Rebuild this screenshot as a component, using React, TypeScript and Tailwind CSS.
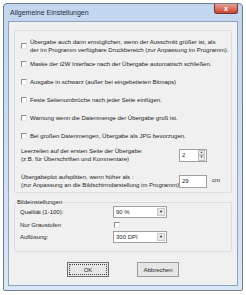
import React from 'react';

function Check({ className = '' }: { className?: string }) {
  return (
    <span
      className={`inline-block w-[6px] h-[6px] shrink-0 border border-t-[#8d8d8d] border-l-[#8d8d8d] border-r-[#e6e6e6] border-b-[#e6e6e6] bg-white ${className}`}
    />
  );
}

function Combo({ value }: { value: string }) {
  return (
    <div className="flex items-center w-[54px] h-[12px] bg-white border border-[#a0a0a0]">
      <span className="flex-1 pl-[2px] leading-none">{value}</span>
      <span className="flex items-center justify-center w-[8px] h-[8px] mr-[1px] bg-[#e9e9e9] border border-[#c8c8c8] text-[4px] leading-none">▼</span>
    </div>
  );
}

const checks: string[][] = [
  [
    'Übergabe auch dann ermöglichen, wenn der Ausschnitt größer ist, als',
    'der im Programm verfügbare Druckbereich (zur Anpassung im Programm).',
  ],
  ['Maske der t2W Interface nach der Übergabe automatisch schließen.'],
  ['Ausgabe in schwarz (außer bei eingebetteten Bitmaps)'],
  ['Feste Seitenumbrüche nach jeder Seite einfügen.'],
  ['Warnung wenn die Datenmenge der Übergabe groß ist.'],
  ['Bei großen Datenmengen, Übergabe als JPG bevorzugen.'],
];

export default function App() {
  return (
    <div
      className="w-[246px] h-[295px] bg-white pt-[3px] pl-[3px] text-[6px] leading-[8px] text-[#1e1e1e]"
      style={{ fontFamily: '"Liberation Sans", Arial, sans-serif' }}
    >
      <div className="w-[240px] h-[288px] rounded-t-[4px] rounded-b-[2px] border border-[#6f7d8c] bg-gradient-to-b from-[#c2d6ee] to-[#d8e6f5] px-[4px] pb-[4px] flex flex-col">
        {/* title bar */}
        <div className="h-[17px] flex items-center justify-between">
          <span className="pl-[2px] text-[7px] text-[#1f2f45]">Allgemeine Einstellungen</span>
          <div className="self-start w-[24px] h-[10px] rounded-b-[3px] border border-t-0 border-[#7a3330] bg-gradient-to-b from-[#e8a093] to-[#c7422f] flex items-center justify-center text-white text-[7px] font-bold leading-none">
            x
          </div>
        </div>
        {/* client */}
        <div className="flex-1 bg-[#f0f0f0] border border-[#8ea3bd] px-[5px] pt-[8px] flex flex-col">
          <div className="h-[163px] border border-[#d5dfe5] rounded-[2px] pl-[6px] pr-[4px] pt-[6px] flex flex-col">
            {checks.map((lines, i) => (
              <div key={i} className={`flex items-center gap-[3px] ${i === 0 ? 'h-[17px]' : 'h-[17px] mt-[1px]'}`}>
                <Check />
                <div className="flex flex-col whitespace-nowrap">
                  {lines.map((l) => (
                    <span key={l}>{l}</span>
                  ))}
                </div>
              </div>
            ))}
            <div className="flex items-center mt-[2px] h-[18px]">
              <div className="flex flex-col w-[158px] whitespace-nowrap">
                <span>Leerzeilen auf der ersten Seite der Übergabe:</span>
                <span>(z.B. für Überschriften und Kommentare)</span>
              </div>
              <div className="flex items-center w-[28px] h-[13px] bg-white border border-[#a0a0a0]">
                <span className="flex-1 pl-[2px]">2</span>
                <div className="flex flex-col w-[7px] h-[11px] mr-[1px]">
                  <span className="flex-1 bg-[#ececec] border border-[#c0c0c0] text-[3px] leading-none flex items-center justify-center">▲</span>
                  <span className="flex-1 bg-[#ececec] border border-[#c0c0c0] text-[3px] leading-none flex items-center justify-center">▼</span>
                </div>
              </div>
            </div>
            <div className="flex items-center mt-[8px] h-[18px]">
              <div className="flex flex-col w-[158px] whitespace-nowrap">
                <span>Übergabeplot aufsplitten, wenn höher als :</span>
                <span>(zur Anpassung an die Bildschirmdarstellung im Programm)</span>
              </div>
              <div className="w-[28px] h-[13px] bg-white border border-[#a0a0a0] pl-[2px] flex items-center">29</div>
              <span className="ml-[5px] -mt-[3px]">cm</span>
            </div>
          </div>
          <div className="relative mt-[9px] h-[50px] border border-[#d5dfe5] rounded-[2px] pl-[5px] pt-[3px] flex flex-col">
            <span className="absolute -top-[5px] left-[1px] bg-[#f0f0f0] px-[1px]">Bildeinstellungen</span>
            <div className="flex items-center h-[12px]">
              <span className="w-[93px]">Qualität (1-100):</span>
              <Combo value="90 %" />
            </div>
            <div className="flex items-center h-[12px] mt-[1px]">
              <span className="w-[94px]">Nur Graustufen</span>
              <Check />
            </div>
            <div className="flex items-center h-[12px]">
              <span className="w-[93px]">Auflösung:</span>
              <Combo value="300 DPI" />
            </div>
          </div>
          <div className="flex justify-center gap-[28px] mt-[10px]">
            <button className="w-[42px] h-[15px] bg-[#e6e6e6] border border-[#707070] outline outline-1 outline-offset-[-3px] outline-dotted outline-[#444] leading-none">
              OK
            </button>
            <button className="w-[42px] h-[15px] bg-[#e6e6e6] border border-[#9a9a9a] leading-none">
              Abbrechen
            </button>
          </div>
        </div>
      </div>
    </div>
  );
}
